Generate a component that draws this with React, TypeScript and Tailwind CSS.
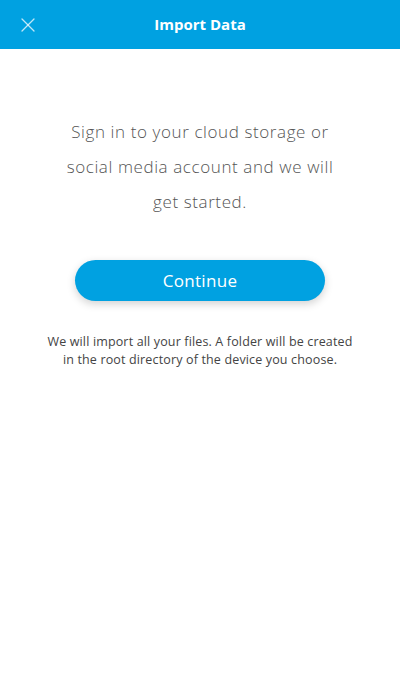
import { X } from "lucide-react";

export default function App() {
  return (
    <div className="min-h-[680px] w-[400px] bg-white font-['Open_Sans',sans-serif]">
      <header className="relative flex h-[49px] items-center justify-center bg-[#00a1e1]">
        <button aria-label="Close" className="absolute left-[16px] top-[13px] text-white/75">
          <X className="h-6 w-6" strokeWidth={1.3} />
        </button>
        <h1 className="text-[15px] font-bold text-white">Import Data</h1>
      </header>

      <main className="flex flex-col items-center px-6">
        <p className="mt-[65px] w-[290px] text-center text-[17px] font-light leading-[35px] tracking-[0.6px] text-[#555]">
          Sign in to your cloud storage or social media account and we will get started.
        </p>

        <button className="mt-[41px] h-[41px] w-[250px] rounded-full bg-[#00a1e1] text-[17px] tracking-[0.3px] text-white shadow-[0_3px_8px_rgba(0,0,0,0.18)]">
          Continue
        </button>

        <p className="mt-[32px] w-[318px] text-center text-[12.5px] leading-[18px] tracking-[0.15px] text-[#444]">
          We will import all your files. A folder will be created in the root directory of the
          device you choose.
        </p>
      </main>
    </div>
  );
}
